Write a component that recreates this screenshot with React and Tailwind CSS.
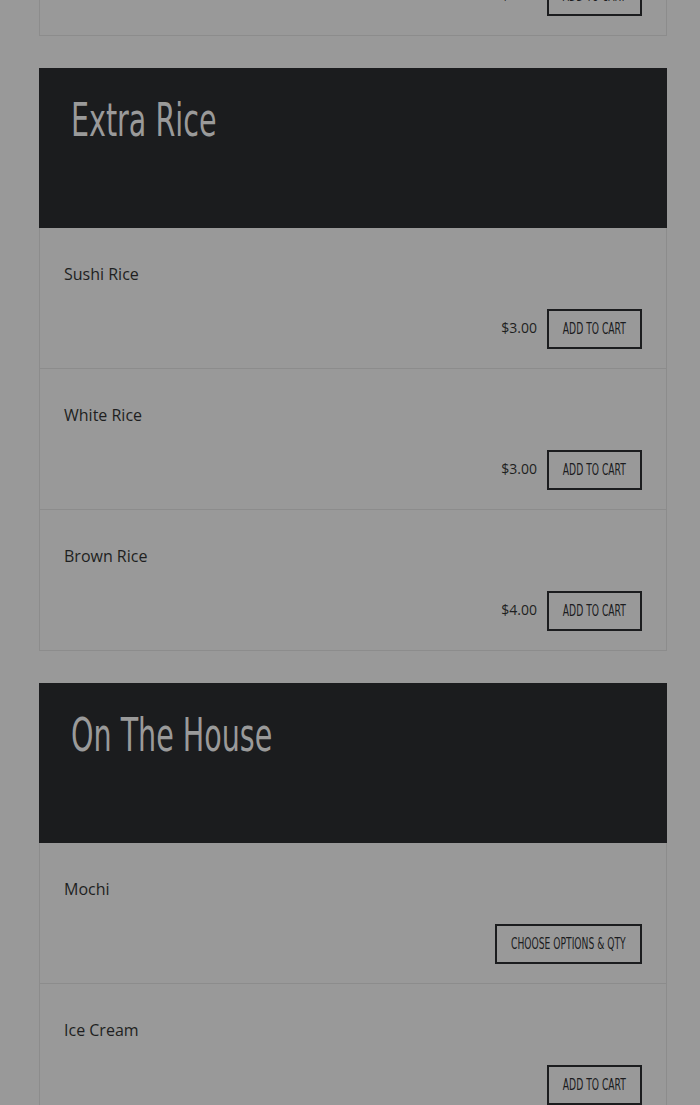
const sections = [
  {
    title: "Extra Rice",
    items: [
      { name: "Sushi Rice", price: "$3.00" },
      { name: "White Rice", price: "$3.00" },
      { name: "Brown Rice", price: "$4.00" },
    ],
  },
  {
    title: "On The House",
    items: [
      { name: "Mochi", options: true },
      { name: "Ice Cream" },
    ],
  },
];

const narrow = "font-['Liberation_Sans_Narrow','DejaVu_Sans_Condensed',sans-serif]";

function CartButton({ label, width }) {
  return (
    <button
      className={`${width} h-[40px] border-2 border-[#1b1c1e] flex items-center justify-center overflow-visible whitespace-nowrap`}
    >
      <span className={`${narrow} inline-block scale-x-[0.68] text-[15px] uppercase text-[#1b1c1e] leading-none`}>
        {label}
      </span>
    </button>
  );
}

function Item({ item }) {
  return (
    <div className="border-x border-b border-[#8c8c8c] px-[24px] pt-[34px] pb-[19px]">
      <div className="h-6 font-['Open_Sans',sans-serif] text-[16px] leading-6 text-[#1e1f21]">{item.name}</div>
      <div className="mt-[23px] flex items-center justify-end gap-[10px]">
        {item.price && (
          <span className="font-['Open_Sans',sans-serif] text-[14px] font-medium text-[#1e1f21] -mt-[3px]">
            {item.price}
          </span>
        )}
        {item.options ? (
          <CartButton label="Choose options & qty" width="w-[147px]" />
        ) : (
          <CartButton label="Add to cart" width="w-[95px]" />
        )}
      </div>
    </div>
  );
}

export default function App() {
  return (
    <div className="min-h-screen bg-[#999999] overflow-hidden">
      <div className="ml-[39px] w-[628px] flex flex-col gap-8 -mt-[105px]">
        {/* tail of previous section */}
        <div>
          <Item item={{ name: "", price: "$3.00" }} />
        </div>

        {sections.map((s) => (
          <div key={s.title}>
            <div className="h-[160px] bg-[#1b1c1e] pt-[29px] pl-[32px]">
              <h2
                className={`${narrow} inline-block origin-left scale-x-[0.69] text-[46px] leading-[46px] text-[#9a9a9a]`}
              >
                {s.title}
              </h2>
            </div>
            {s.items.map((it) => (
              <Item key={it.name} item={it} />
            ))}
          </div>
        ))}
      </div>
    </div>
  );
}
